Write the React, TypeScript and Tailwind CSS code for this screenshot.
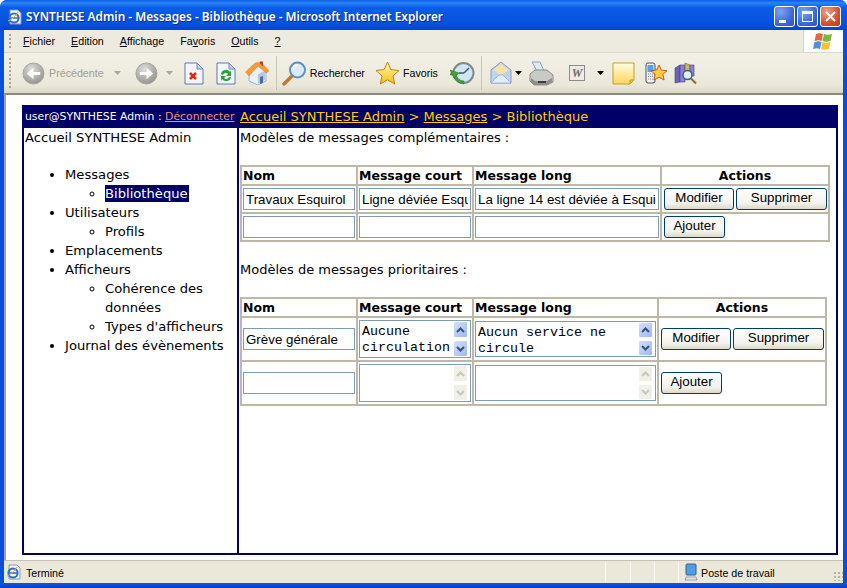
const Underlined = ({ before = "", letter, after = "" }: { before?: string; letter: string; after?: string }) => (
  <span>
    {before}
    <span className="underline">{letter}</span>
    {after}
  </span>
);

const Grip = ({ h }: { h: string }) => (
  <div className={`${h} w-[3px] ml-[5px] border-l-2 border-dotted border-[#a8a591]`} />
);

const Arrow = ({ dark = false }: { dark?: boolean }) => (
  <svg width="7" height="4" viewBox="0 0 7 4" className="shrink-0">
    <path d="M0 0h7L3.5 4z" fill={dark ? "#000" : "#a9a79b"} />
  </svg>
);

const NavIcon = ({ flip = false }: { flip?: boolean }) => (
  <svg width="23" height="23" viewBox="0 0 24 24" className="shrink-0">
    <defs>
      <radialGradient id="navg" cx="40%" cy="30%" r="75%">
        <stop offset="0" stopColor="#dededa" />
        <stop offset="1" stopColor="#8f8f8b" />
      </radialGradient>
    </defs>
    <circle cx="12" cy="12" r="11" fill="url(#navg)" stroke="#a5a5a0" />
    <path
      d={flip ? "M5 10.5h7V6l7 6-7 6v-4.500H5z" : "M19 10.5h-7V6l-7 6 7 6v-4.500h7z"}
      fill="#fff"
    />
  </svg>
);

const DocIcon = ({ children }: { children: React.ReactNode }) => (
  <svg width="20" height="23" viewBox="0 0 20 23" className="shrink-0">
    <path d="M1 1h12l6 6v15H1z" fill="#f3f6fd" stroke="#5f78b4" />
    <path d="M13 1v6h6z" fill="#c6d2ef" stroke="#7489bd" />
    {children}
  </svg>
);

const HomeIcon = () => (
  <svg width="25" height="24" viewBox="0 0 25 24" className="shrink-0">
    <path d="M4 11v9l9 4 8-4V10l-8-7z" fill="#e9f0fa" stroke="#9fb2d2" />
    <path d="M13 13l7-3v9l-7 4z" fill="#b3c8e8" />
    <path d="M0.500 11L10 2l6-1 8 9-3 2-8-7L4 15z" fill="#f59a3c" stroke="#e07f2c" strokeWidth="0.5" />
    <path d="M15 0.500h3v5l-3-3z" fill="#b5402a" />
    <path d="M15 16l3-1v7l-3 1z" fill="#4a6d9c" />
  </svg>
);

const SearchIcon = () => (
  <svg width="25" height="25" viewBox="0 0 25 25" className="shrink-0">
    <path d="M10 15L2 23" stroke="#c9772a" strokeWidth="3.500" strokeLinecap="round" />
    <circle cx="15.500" cy="9" r="7.500" fill="#d8ecfb" stroke="#5f8fc0" strokeWidth="2" />
    <path d="M11 8a5 5 0 0 1 5-4" stroke="#fff" strokeWidth="2" fill="none" />
  </svg>
);

const StarIcon = () => (
  <svg width="25" height="24" viewBox="0 0 25 24" className="shrink-0">
    <defs>
      <linearGradient id="starg" x1="0" y1="0" x2="0" y2="1">
        <stop offset="0" stopColor="#fff9b8" />
        <stop offset="1" stopColor="#f5bd14" />
      </linearGradient>
    </defs>
    <path d="M12.500 1l3.400 7.600 8.100.9-6 5.500 1.700 8-7.200-4.100-7.200 4.100 1.700-8-6-5.500 8.100-.9z" fill="url(#starg)" stroke="#b98a12" />
  </svg>
);

const HistoryIcon = () => (
  <svg width="25" height="25" viewBox="0 0 25 25" className="shrink-0">
    <circle cx="13.500" cy="12" r="10" fill="#cfe6f7" stroke="#7d8a8e" strokeWidth="2" />
    <path d="M14 12l5-5M14 12h-5" stroke="#4a5a5e" strokeWidth="1.500" />
    <path d="M1 12l5 0a8 8 0 0 0 8 8v3A12 12 0 0 1 3 14H0z" fill="#3fa535" stroke="#24741f" strokeWidth="0.500" />
    <path d="M0 9l9 3-5 5z" fill="#3fa535" stroke="#24741f" strokeWidth="0.500" />
  </svg>
);

const MailIcon = () => (
  <svg width="22" height="24" viewBox="0 0 22 24" className="shrink-0">
    <path d="M1 9l10-8 10 8v13H1z" fill="#bcd3f2" stroke="#8b9cc6" />
    <path d="M3 9l8-6 8 6-8 5z" fill="#f8e2a6" />
    <path d="M1 22l8-8h4l8 8z" fill="#e3edfb" stroke="#8b9cc6" strokeWidth="0.600" />
  </svg>
);

const PrinterIcon = () => (
  <svg width="25" height="25" viewBox="0 0 25 25" className="shrink-0">
    <path d="M3 1h8l4 9H8z" fill="#dfe8f5" stroke="#8fa1b8" />
    <path d="M1 13l5-4h12l6 5v7l-6 3H5l-4-4z" fill="#c9c9c6" stroke="#8c8c88" />
    <path d="M2 17l4 3h12l5-3v4l-5 3H5l-3-3z" fill="#8f8f8c" />
    <path d="M9 20h8v2H9z" fill="#3d3d3b" />
  </svg>
);

const WordIcon = () => (
  <div className="shrink-0 w-[16px] h-[16px] border border-[#8c8c88] bg-[#ecebe4] flex items-center justify-center [font-family:'Liberation_Serif',serif] italic font-bold text-[12px] leading-none text-[#6e6e6a]">
    W
  </div>
);

const NoteIcon = () => (
  <svg width="23" height="23" viewBox="0 0 23 23" className="shrink-0">
    <defs>
      <linearGradient id="noteg" x1="0" y1="0" x2="0" y2="1">
        <stop offset="0" stopColor="#fffde0" />
        <stop offset="1" stopColor="#fbd65f" />
      </linearGradient>
    </defs>
    <path d="M1 1h21v17l-4 4H1z" fill="url(#noteg)" stroke="#c79d23" />
    <path d="M18 22v-4h4z" fill="#f2c14a" stroke="#c79d23" />
  </svg>
);

const MobileIcon = () => (
  <svg width="23" height="22" viewBox="0 0 23 22" className="shrink-0">
    <rect x="1" y="1" width="9" height="20" rx="2" fill="#eef0f4" stroke="#4d5566" />
    <rect x="2.500" y="3" width="6" height="7" fill="#58a3e3" />
    <path d="M3 12h5M3 14.500h5M3 17h5" stroke="#7c8493" strokeDasharray="1 1" />
    <path d="M14 3l2.400 5 5.600.7-4.100 3.700 1.200 5.600-5.100-2.800-5.100 2.800 1.200-5.600L6 8.700l5.600-.7z" fill="#fbcf3a" stroke="#c1352a" strokeWidth="0.800" />
  </svg>
);

const LibraryIcon = () => (
  <svg width="23" height="23" viewBox="0 0 23 23" className="shrink-0">
    <path d="M1 6l5-3v17l-5 1z" fill="#6c62b8" stroke="#433d85" strokeWidth="0.600" />
    <path d="M6 3l5 0v17H6z" fill="#8a82cc" stroke="#433d85" strokeWidth="0.600" />
    <path d="M11 1l5 2v9h-5z" fill="#c8b66a" stroke="#6b5f2c" strokeWidth="0.600" />
    <path d="M16 3l4 0v11h-4z" fill="#8a82cc" stroke="#433d85" strokeWidth="0.600" />
    <circle cx="13.500" cy="13" r="4.500" fill="#dcecf8" stroke="#3f5a7a" strokeWidth="1.400" />
    <path d="M17 16.500l5 5" stroke="#8a6d2f" strokeWidth="2" />
  </svg>
);

const IeIcon = ({ size }: { size: number }) => (
  <svg width={size} height={size} viewBox="0 0 16 16" className="shrink-0">
    <path d="M3 1h8l3 3v11H3z" fill="#f4f6fb" stroke="#8d97b0" />
    <circle cx="7" cy="9" r="4.600" fill="none" stroke="#2e6fd0" strokeWidth="2" />
    <path d="M2.500 9h9" stroke="#2e6fd0" strokeWidth="1.600" />
    <path d="M1 12c3-1 8-5 10-9" stroke="#e9b23a" strokeWidth="1" fill="none" />
  </svg>
);

const WinButton = ({ children, red = false }: { children: React.ReactNode; red?: boolean }) => (
  <div
    className={`w-[21px] h-[21px] rounded-[3px] border border-white flex items-center justify-center ${
      red
        ? "bg-[radial-gradient(circle_at_30%_25%,#f0a088,#d8502c_60%,#b93a18)]"
        : "bg-[radial-gradient(circle_at_30%_25%,#7fa4ee,#3c68d8_60%,#2a50c0)]"
    }`}
  >
    {children}
  </div>
);

const WindowsFlag = () => (
  <svg width="21" height="19" viewBox="0 0 21 19">
    <path d="M3 2c2-1 4-1 7 0l-1.500 7c-2-1-4-1-7 0z" fill="#e8663c" />
    <path d="M11 2c3 1 5 1 8 0l-1.500 7c-3 1-5 1-8 0z" fill="#7cb83e" />
    <path d="M1.500 10c3-1 5-1 7 0L7 17c-2-1-4-1-7 0z" fill="#4f8fdc" />
    <path d="M9.500 10c3 1 5 1 8 0L16 17c-3 1-5 1-8 0z" fill="#f2c23a" />
  </svg>
);

const XpButton = ({ label, w }: { label: string; w: string }) => (
  <button
    className={`${w} h-[22px] rounded-[3px] border border-[#003c74] bg-[linear-gradient(#ffffff,#f4f3ee_70%,#dcd8ca)] text-[13.33px] leading-none text-black [font-family:'Liberation_Sans',Arial,sans-serif] pb-[2px]`}
  >
    {label}
  </button>
);

const TextInput = ({ value = "", w = "w-[112px]" }: { value?: string; w?: string }) => (
  <input
    readOnly
    value={value}
    className={`${w} h-[22px] border border-[#7f9db9] bg-white px-[2px] text-[13.33px] text-black outline-none [font-family:'Liberation_Sans',Arial,sans-serif] block`}
  />
);

const ScrollButton = ({ up, on }: { up: boolean; on: boolean }) => (
  <div
    className={`w-[15px] h-[17px] rounded-[2px] border border-white flex items-center justify-center ${
      on ? "bg-[linear-gradient(135deg,#d4e0fc,#9cb9f0)]" : "bg-[#f0efe8]"
    }`}
  >
    <svg width="9" height="6" viewBox="0 0 9 6">
      <path
        d={up ? "M1 5l3.500-3.500L8 5" : "M1 1l3.500 3.500L8 1"}
        fill="none"
        stroke={on ? "#3c4f78" : "#c9c7ba"}
        strokeWidth="2"
      />
    </svg>
  </div>
);

const TextArea = ({ lines, w, h, on }: { lines: string[]; w: string; h: string; on: boolean }) => (
  <div className={`${w} ${h} border border-[#7f9db9] bg-white flex justify-between`}>
    <div className="pl-[2px] pt-[3px] text-[13.33px] leading-[16px] text-black [font-family:'Liberation_Mono','Courier_New',monospace] whitespace-pre">
      {lines.map((l) => (
        <div key={l}>{l}</div>
      ))}
    </div>
    <div className="flex flex-col justify-center gap-[2px] pr-[2px]">
      <ScrollButton up on={on} />
      <ScrollButton up={false} on={on} />
    </div>
  </div>
);

const th = "border border-[#bdb9a6] px-[1px] pt-[2px] h-[19px] font-bold text-[12.5px] leading-none";
const td = "border border-[#bdb9a6] px-[1px] py-[2px] align-middle";
const tdActions = "border border-[#bdb9a6] pl-[2px] pr-[1px] py-[2px] align-middle";

const Heading = ({ w }: { w: string[] }) => (
  <thead>
    <tr>
      <th className={`${th} ${w[0]} text-left`}>Nom</th>
      <th className={`${th} ${w[1]} text-left`}>Message court</th>
      <th className={`${th} ${w[2]} text-left`}>Message long</th>
      <th className={`${th} ${w[3]} text-center`}>Actions</th>
    </tr>
  </thead>
);

export default function App() {
  return (
    <div className="w-[847px] h-[588px] overflow-hidden flex flex-col rounded-t-[7px] bg-[#0a4ee0] px-[4px] [font-family:'Liberation_Sans',Arial,sans-serif]">
      {/* barre de titre */}
      <div className="h-[30px] shrink-0 -mx-[4px] px-[7px] pt-[3px] flex items-center bg-[linear-gradient(#0a5ae6,#2a86f6_10%,#0a5ce8_25%,#0450dc_85%,#0346c4)]">
        <IeIcon size={16} />
        <span className="ml-[3px] mt-[1px] text-white text-[11.85px] font-semibold [font-family:'Noto_Sans',sans-serif] [text-shadow:1px_1px_#0a2a90]">
          SYNTHESE Admin - Messages - Bibliothèque - Microsoft Internet Explorer
        </span>
        <div className="ml-auto mr-[-1px] flex gap-[2px]">
          <WinButton>
            <div className="w-[7px] h-[3px] bg-white mt-[9px] mr-[5px]" />
          </WinButton>
          <WinButton>
            <div className="w-[11px] h-[11px] border border-t-[3px] border-white" />
          </WinButton>
          <WinButton red>
            <svg width="11" height="11" viewBox="0 0 11 11">
              <path d="M1 1l9 9M10 1l-9 9" stroke="#fff" strokeWidth="2" />
            </svg>
          </WinButton>
        </div>
      </div>

      {/* menu */}
      <div className="h-[23px] shrink-0 flex items-stretch bg-[#edebdf] border-b border-[#dbd8c9]">
        <div className="flex-1 flex items-center text-[10.7px] text-black border-r border-[#d8d5c5]">
          <Grip h="h-[14px]" />
          <div className="ml-[11px] flex gap-[16px]">
            <Underlined letter="F" after="ichier" />
            <Underlined letter="E" after="dition" />
            <Underlined letter="A" after="ffichage" />
            <Underlined before="Fa" letter="v" after="oris" />
            <Underlined letter="O" after="utils" />
            <Underlined letter="?" />
          </div>
        </div>
        <div className="w-[39px] bg-white flex items-center justify-center">
          <WindowsFlag />
        </div>
      </div>

      {/* barre d'outils */}
      <div className="h-[40px] shrink-0 flex items-center bg-[linear-gradient(#f3f1e7,#ebe8da_80%,#dcd8c8)] text-[10.7px] text-black">
        <Grip h="h-[30px]" />
        <div className="ml-[10px]"><NavIcon /></div>
        <span className="ml-[4px] text-[#a09e92]">Précédente</span>
        <div className="ml-[10px]"><Arrow /></div>
        <div className="ml-[14px]"><NavIcon flip /></div>
        <div className="ml-[8px]"><Arrow /></div>
        <div className="ml-[11px]">
          <DocIcon>
            <path d="M6 11l6 6M12 11l-6 6" stroke="#e02a10" strokeWidth="2.500" />
          </DocIcon>
        </div>
        <div className="ml-[12px]">
          <DocIcon>
            <path d="M5 12a5 5 0 0 1 9-2l1-2v6h-5l2-2a3 3 0 0 0-5 1z" fill="#2fa336" />
            <path d="M15 15a5 5 0 0 1-9 2l-1 2v-5h5l-2 2a3 3 0 0 0 5-1z" fill="#2fa336" />
          </DocIcon>
        </div>
        <div className="ml-[9px]"><HomeIcon /></div>
        <div className="ml-[6px] w-px h-[34px] bg-[#c9c6b6]" />
        <div className="ml-[5px]"><SearchIcon /></div>
        <span className="ml-[3px]">Rechercher</span>
        <div className="ml-[10px]"><StarIcon /></div>
        <span className="ml-[3px]">Favoris</span>
        <div className="ml-[12px]"><HistoryIcon /></div>
        <div className="ml-[6px] w-px h-[34px] bg-[#c9c6b6]" />
        <div className="ml-[8px]"><MailIcon /></div>
        <div className="ml-[3px]"><Arrow dark /></div>
        <div className="ml-[7px]"><PrinterIcon /></div>
        <div className="ml-[15px]"><WordIcon /></div>
        <div className="ml-[12px]"><Arrow dark /></div>
        <div className="ml-[8px]"><NoteIcon /></div>
        <div className="ml-[10px]"><MobileIcon /></div>
        <div className="ml-[6px]"><LibraryIcon /></div>
      </div>

      {/* page */}
      <div className="flex-1 min-h-0 bg-white border-t-2 border-l-2 border-t-[#8c8a7c] border-l-[#a6a498] pl-[16px] pr-[5px] pt-[10px] pb-[5px] flex flex-col">
        <div className="flex-1 min-h-0 flex flex-col border-2 border-[#000066] text-[13px] text-black [font-family:'DejaVu_Sans',Verdana,sans-serif]">
          <div className="h-[21px] shrink-0 bg-[#000066] flex items-center text-white">
            <div className="w-[213px] shrink-0 pl-px text-[10.85px] whitespace-nowrap">
              user@SYNTHESE Admin : <span className="underline text-[#f09078]">Déconnecter</span>
            </div>
            <div className="ml-[3px] mb-[1px] text-[13px] whitespace-nowrap text-[#ffcc00]">
              <span className="underline">Accueil SYNTHESE Admin</span> &gt;{" "}
              <span className="underline">Messages</span> &gt; Bibliothèque
            </div>
          </div>

          <div className="flex-1 min-h-0 flex">
            <div className="w-[213px] shrink-0 pl-px leading-[19px] text-[13.15px]">
              <div>Accueil SYNTHESE Admin</div>
              <ul className="list-disc pl-[40px] mt-[18px]">
                <li>
                  Messages
                  <ul className="list-[circle] pl-[40px]">
                    <li className="h-[19px]">
                      <span className="block w-[84px] h-[17px] leading-[18px] bg-[#000066] text-white">Bibliothèque</span>
                    </li>
                  </ul>
                </li>
                <li>
                  Utilisateurs
                  <ul className="list-[circle] pl-[40px]">
                    <li>Profils</li>
                  </ul>
                </li>
                <li>Emplacements</li>
                <li>
                  Afficheurs
                  <ul className="list-[circle] pl-[40px]">
                    <li>Cohérence des données</li>
                    <li>Types d'afficheurs</li>
                  </ul>
                </li>
                <li>Journal des évènements</li>
              </ul>
            </div>

            <div className="flex-1 border-l-2 border-[#000066] pl-px">
              <div className="leading-[19px]">Modèles de messages complémentaires :</div>
              <table className="mt-[18px] w-[590px] table-fixed border-separate border-spacing-0 border border-[#bdb9a6]">
                <Heading w={["w-[116px]", "w-[116px]", "w-[188px]", "w-[168px]"]} />
                <tbody>
                  <tr>
                    <td className={td}><TextInput value="Travaux Esquirol" /></td>
                    <td className={td}><TextInput value="Ligne déviée Esquirol" /></td>
                    <td className={td}><TextInput value="La ligne 14 est déviée à Esquirol" w="w-[184px]" /></td>
                    <td className={tdActions}>
                      <div className="flex gap-[2px]">
                        <XpButton label="Modifier" w="w-[70px]" />
                        <XpButton label="Supprimer" w="w-[91px]" />
                      </div>
                    </td>
                  </tr>
                  <tr>
                    <td className={td}><TextInput /></td>
                    <td className={td}><TextInput /></td>
                    <td className={td}><TextInput w="w-[184px]" /></td>
                    <td className={tdActions}><XpButton label="Ajouter" w="w-[61px]" /></td>
                  </tr>
                </tbody>
              </table>

              <div className="mt-[18px] leading-[19px]">Modèles de messages prioritaires :</div>
              <table className="mt-[18px] w-[587px] table-fixed border-separate border-spacing-0 border border-[#bdb9a6]">
                <Heading w={["w-[116px]", "w-[116px]", "w-[185px]", "w-[168px]"]} />
                <tbody>
                  <tr>
                    <td className={td}><TextInput value="Grève générale" /></td>
                    <td className={td}>
                      <TextArea lines={["Aucune", "circulation"]} w="w-[112px]" h="h-[38px]" on />
                    </td>
                    <td className={td}>
                      <TextArea lines={["Aucun service ne", "circule"]} w="w-[181px]" h="h-[36px]" on />
                    </td>
                    <td className={tdActions}>
                      <div className="flex gap-[2px]">
                        <XpButton label="Modifier" w="w-[70px]" />
                        <XpButton label="Supprimer" w="w-[91px]" />
                      </div>
                    </td>
                  </tr>
                  <tr>
                    <td className={td}><TextInput /></td>
                    <td className={td}>
                      <TextArea lines={[" "]} w="w-[112px]" h="h-[38px]" on={false} />
                    </td>
                    <td className={td}>
                      <TextArea lines={[" "]} w="w-[181px]" h="h-[36px]" on={false} />
                    </td>
                    <td className={tdActions}><XpButton label="Ajouter" w="w-[61px]" /></td>
                  </tr>
                </tbody>
              </table>
            </div>
          </div>
        </div>
      </div>

      {/* barre d'état */}
      <div className="h-[23px] shrink-0 flex items-center bg-[#ebe8da] border-t border-[#c4c2b4] text-[10.7px] text-black">
        <div className="ml-[2px]"><IeIcon size={16} /></div>
        <span className="ml-[4px] mt-[2px]">Terminé</span>
        <div className="ml-[541px] flex items-center h-full">
          <div className="w-px h-[20px] bg-[#faf9f4]" />
          <div className="ml-[24px] w-px h-[20px] bg-[#faf9f4]" />
          <div className="ml-[23px] w-px h-[20px] bg-[#faf9f4]" />
          <div className="ml-[23px] w-px h-[20px] bg-[#faf9f4]" />
          <svg width="14" height="18" viewBox="0 0 14 18" className="ml-[5px]">
            <rect x="2" y="1" width="10" height="11" rx="1" fill="#4f9de2" stroke="#3d5f8e" />
            <path d="M2 14h10l1 3H1z" fill="#dfe3ea" stroke="#6d7686" strokeWidth="0.600" />
          </svg>
          <span className="ml-[3px] mt-[2px] w-[132px] whitespace-nowrap">Poste de travail</span>
          <div className="w-[10px] h-[10px] mt-[8px] bg-[radial-gradient(circle,#b5b2a2_1px,transparent_1.500px)] bg-[length:4px_4px]" />
        </div>
      </div>
      <div className="h-[5px] shrink-0 -mx-[4px] bg-[linear-gradient(#0a5ae6,#0a3cc8)]" />
    </div>
  );
}
